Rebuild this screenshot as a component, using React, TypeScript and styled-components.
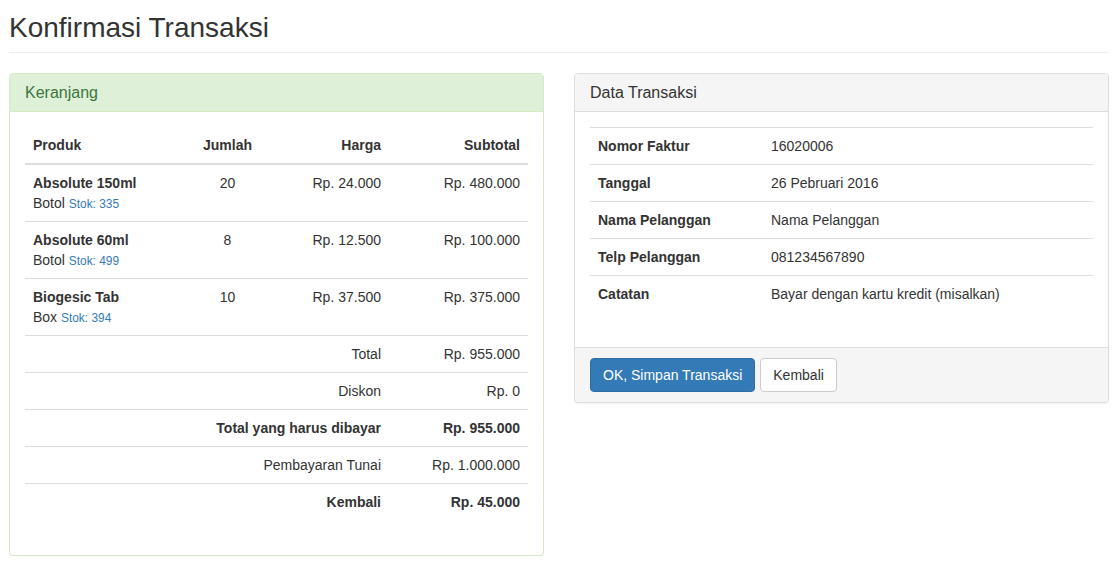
import React from "react";
import styled, { createGlobalStyle } from "styled-components";

const Global = createGlobalStyle`
  * { box-sizing: border-box; }
  body {
    margin: 0;
    font-family: "Liberation Sans", Arial, Helvetica, sans-serif;
    font-size: 14px;
    line-height: 1.42857143;
    color: #333;
    background: #fff;
  }
`;

const Page = styled.div`
  padding: 12px 8px 0 9px;
`;

const PageHeader = styled.h2`
  margin: 0 0 20px;
  padding-bottom: 9px;
  border-bottom: 1px solid #eee;
  font-size: 28px;
  font-weight: 500;
  line-height: 31px;
  color: #333;
`;

const Columns = styled.div`
  display: grid;
  grid-template-columns: 535px 535px;
  column-gap: 30px;
  align-items: start;
`;

const Panel = styled.div<{ $variant: "success" | "default" }>`
  border: 1px solid ${(p) => (p.$variant === "success" ? "#d6e9c6" : "#ddd")};
  border-radius: 4px;
  background: #fff;
  box-shadow: 0 1px 1px rgba(0, 0, 0, 0.05);
  overflow: hidden;
`;

const PanelHeading = styled.div<{ $variant: "success" | "default" }>`
  padding: 10px 15px;
  font-size: 16px;
  line-height: 17px;
  color: ${(p) => (p.$variant === "success" ? "#3c763d" : "#333")};
  background: ${(p) => (p.$variant === "success" ? "#dff0d8" : "#f5f5f5")};
  border-bottom: 1px solid ${(p) => (p.$variant === "success" ? "#d6e9c6" : "#ddd")};
`;

const PanelBody = styled.div`
  padding: 15px;
`;

const PanelFooter = styled.div`
  padding: 10px 15px;
  background: #f5f5f5;
  border-top: 1px solid #ddd;
  display: flex;
  gap: 5px;
`;

const Table = styled.table`
  width: 100%;
  border-collapse: collapse;
  border-spacing: 0;
  margin-bottom: 20px;
  table-layout: fixed;
`;

type Align = "left" | "center" | "right";

const Th = styled.th<{ $align?: Align }>`
  padding: 8px;
  text-align: ${(p) => p.$align || "left"};
  font-weight: bold;
  vertical-align: bottom;
  border-bottom: 2px solid #ddd;
  line-height: 1.42857143;
`;

const Td = styled.td<{ $align?: Align; $bold?: boolean }>`
  padding: 8px;
  text-align: ${(p) => p.$align || "left"};
  font-weight: ${(p) => (p.$bold ? "bold" : "normal")};
  vertical-align: top;
  border-top: 1px solid #ddd;
  line-height: 1.42857143;
`;

const ProductName = styled.div`
  font-weight: bold;
`;

const Stock = styled.small`
  font-size: 85%;
  color: #337ab7;
`;

const Button = styled.button<{ $primary?: boolean }>`
  display: inline-block;
  padding: 6px 12px;
  font-family: inherit;
  font-size: 14px;
  line-height: 1.42857143;
  border-radius: 4px;
  border: 1px solid ${(p) => (p.$primary ? "#2e6da4" : "#ccc")};
  background: ${(p) => (p.$primary ? "#337ab7" : "#fff")};
  color: ${(p) => (p.$primary ? "#fff" : "#333")};
  cursor: pointer;
`;

const items = [
  { name: "Absolute 150ml", unit: "Botol", stok: 335, qty: 20, price: "Rp. 24.000", sub: "Rp. 480.000" },
  { name: "Absolute 60ml", unit: "Botol", stok: 499, qty: 8, price: "Rp. 12.500", sub: "Rp. 100.000" },
  { name: "Biogesic Tab", unit: "Box", stok: 394, qty: 10, price: "Rp. 37.500", sub: "Rp. 375.000" },
];

const totals = [
  { label: "Total", value: "Rp. 955.000", bold: false },
  { label: "Diskon", value: "Rp. 0", bold: false },
  { label: "Total yang harus dibayar", value: "Rp. 955.000", bold: true },
  { label: "Pembayaran Tunai", value: "Rp. 1.000.000", bold: false },
  { label: "Kembali", value: "Rp. 45.000", bold: true },
];

const info = [
  ["Nomor Faktur", "16020006"],
  ["Tanggal", "26 Pebruari 2016"],
  ["Nama Pelanggan", "Nama Pelanggan"],
  ["Telp Pelanggan", "081234567890"],
  ["Catatan", "Bayar dengan kartu kredit (misalkan)"],
];

export default function App() {
  return (
    <Page>
      <Global />
      <PageHeader>Konfirmasi Transaksi</PageHeader>
      <Columns>
        <Panel $variant="success">
          <PanelHeading $variant="success">Keranjang</PanelHeading>
          <PanelBody>
            <Table>
              <colgroup>
                <col style={{ width: 145 }} />
                <col style={{ width: 115 }} />
                <col style={{ width: 104 }} />
                <col style={{ width: 139 }} />
              </colgroup>
              <thead>
                <tr>
                  <Th>Produk</Th>
                  <Th $align="center">Jumlah</Th>
                  <Th $align="right">Harga</Th>
                  <Th $align="right">Subtotal</Th>
                </tr>
              </thead>
              <tbody>
                {items.map((it) => (
                  <tr key={it.name}>
                    <Td>
                      <ProductName>{it.name}</ProductName>
                      {it.unit} <Stock>Stok: {it.stok}</Stock>
                    </Td>
                    <Td $align="center">{it.qty}</Td>
                    <Td $align="right">{it.price}</Td>
                    <Td $align="right">{it.sub}</Td>
                  </tr>
                ))}
                {totals.map((t) => (
                  <tr key={t.label}>
                    <Td colSpan={3} $align="right" $bold={t.bold}>
                      {t.label}
                    </Td>
                    <Td $align="right" $bold={t.bold}>
                      {t.value}
                    </Td>
                  </tr>
                ))}
              </tbody>
            </Table>
          </PanelBody>
        </Panel>

        <Panel $variant="default">
          <PanelHeading $variant="default">Data Transaksi</PanelHeading>
          <PanelBody>
            <Table>
              <colgroup>
                <col style={{ width: 173 }} />
                <col />
              </colgroup>
              <tbody>
                {info.map(([k, v]) => (
                  <tr key={k}>
                    <Td $bold>{k}</Td>
                    <Td>{v}</Td>
                  </tr>
                ))}
              </tbody>
            </Table>
          </PanelBody>
          <PanelFooter>
            <Button $primary>OK, Simpan Transaksi</Button>
            <Button>Kembali</Button>
          </PanelFooter>
        </Panel>
      </Columns>
    </Page>
  );
}
